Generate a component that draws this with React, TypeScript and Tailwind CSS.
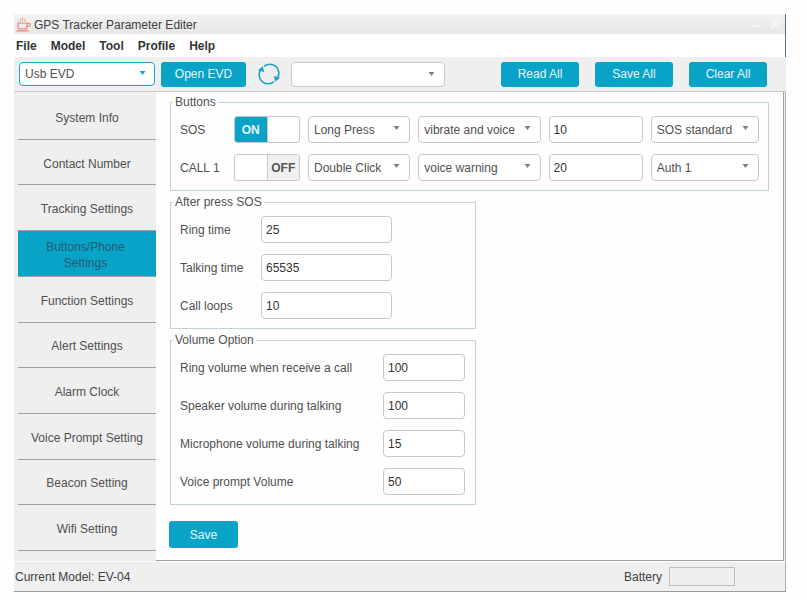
import React, { useState } from "react";
import clsx from "clsx";

const MENUS = ["File", "Model", "Tool", "Profile", "Help"];

const NAV_ITEMS = [
  "System Info",
  "Contact Number",
  "Tracking Settings",
  "Buttons/Phone Settings",
  "Function Settings",
  "Alert Settings",
  "Alarm Clock",
  "Voice Prompt Setting",
  "Beacon Setting",
  "Wifi Setting",
];

const BUTTON_ROWS = [
  { name: "SOS", enabled: true, press: "Long Press", feedback: "vibrate and voice", value: "10", target: "SOS standard" },
  { name: "CALL 1", enabled: false, press: "Double Click", feedback: "voice warning", value: "20", target: "Auth 1" },
];

const AFTER_SOS = [
  { id: "ring-time", label: "Ring time", value: "25" },
  { id: "talking-time", label: "Talking time", value: "65535" },
  { id: "call-loops", label: "Call loops", value: "10" },
];

const VOLUMES = [
  { id: "ring-volume", label: "Ring volume when receive a call", value: "100" },
  { id: "speaker-volume", label: "Speaker volume during talking", value: "100" },
  { id: "mic-volume", label: "Microphone volume during talking", value: "15" },
  { id: "prompt-volume", label: "Voice prompt Volume", value: "50" },
];

const JavaIcon = () => (
  <svg width="15" height="15" viewBox="0 0 15 15" fill="none" stroke="#e98478" strokeWidth="1.2" aria-hidden="true">
    <path d="M2 6h9v3.500c0 1.600-1 2.500-2.500 2.500h-4C3 12 2 11 2 9.500z" />
    <path d="M11 6.500h2.500c1 0 .8 3-1 3H11M0.500 13.800h12" />
    <path d="M4.500 4.500c-1-1 .6-1.500-.2-3M6.600 4.500c-1-1 .8-2-.1-4M8.800 4.500c-1-1 .6-1.500-.2-3" strokeWidth="0.8" />
  </svg>
);

const RefreshIcon = () => (
  <svg width="22" height="22" viewBox="0 0 22 22" fill="none" stroke="#1ba3c8" strokeWidth="1.600" aria-hidden="true">
    <path d="M6 3.300A9 9 0 0 1 19.700 14.500" />
    <path d="M16 18.700A9 9 0 0 1 2.300 7.500" />
    <path d="M15.800 13l6.200 1.700-4.800 4zM6.200 9L0 7.300l4.800-4z" fill="#1ba3c8" stroke="none" />
  </svg>
);

type SelectProps = {
  label: string;
  value: string;
  className?: string;
  focused?: boolean;
};

const Select = ({ label, value, className, focused }: SelectProps) => (
  <div className={clsx("relative", className)}>
    <select
      aria-label={label}
      defaultValue={value}
      className={clsx(
        "h-full w-full appearance-none rounded-[4px] border bg-white pr-[18px] pl-[5px] outline-none",
        focused ? "border-[#1ba3c8]" : "border-[#c8c8c8]",
      )}
    >
      <option value={value}>{value}</option>
    </select>
    <svg
      width="7"
      height="4"
      viewBox="0 0 7 4"
      className={clsx(
        "pointer-events-none absolute",
        focused ? "top-[9px] right-[9px] text-[#1ba3c8]" : "top-[10px] right-[10px] text-[#808080]",
      )}
      aria-hidden="true"
    >
      <path d="M0.500 0h6L3.500 4z" fill="currentColor" />
    </svg>
  </div>
);

const inputBase =
  "h-[27px] w-full min-w-0 rounded-[4px] border border-[#c8c8c8] bg-white px-[4px] text-[#333333] outline-none focus:border-[#1ba3c8]";

const PrimaryButton = ({ className, ...props }: React.ButtonHTMLAttributes<HTMLButtonElement>) => (
  <button
    type="button"
    className={clsx("rounded-[3px] bg-[#0aa3c8] text-center text-[#e6f7fb] hover:bg-[#0892b3]", className)}
    {...props}
  />
);

const Toggle = ({ label, initial }: { label: string; initial: boolean }) => {
  const [on, setOn] = useState(initial);
  return (
    <label className="relative flex h-[27px] cursor-pointer overflow-hidden rounded-[3px] border border-[#c8c8c8] bg-white font-bold">
      <input
        type="checkbox"
        aria-label={label}
        checked={on}
        onChange={(e) => setOn(e.target.checked)}
        className="sr-only"
      />
      <span className={clsx("flex flex-1 items-center justify-center", on && "bg-[#0aa3c8] text-[#e6f7fb]")}>
        {on ? "ON" : ""}
      </span>
      <span
        className={clsx(
          "flex flex-1 items-center justify-center border-l border-[#c8c8c8]",
          !on && "bg-[#f0f0f0] text-[#555555]",
        )}
      >
        {on ? "" : "OFF"}
      </span>
    </label>
  );
};

const Group = ({ title, className, children }: { title: string; className?: string; children: React.ReactNode }) => (
  <fieldset className={clsx("min-w-0 border border-[#c3d3dc]", className)}>
    <legend className="ml-[2px] px-[2px] leading-[15px]">{title}</legend>
    <div className="flex flex-col gap-[11px] px-[9px] pt-[6px] pb-[9px]">{children}</div>
  </fieldset>
);

const App: React.FC = () => {
  const [active, setActive] = useState("Buttons/Phone Settings");

  return (
    <div className="min-h-screen bg-[#fefefe] pt-[14px] pr-[21px] pl-[14px] font-['Liberation_Sans',Arial,sans-serif] text-[12px] leading-[16px] text-[#505050]">
      <div className="border-b border-[#9a9a9a] bg-[#efefef]">
        <div className="border-r border-[#56708c]">
          <header className="flex h-[20px] items-center bg-linear-to-b from-[#f3f3f3] to-[#e6e6e6] pr-[5px] pl-[2px]">
            <JavaIcon />
            <h1 className="ml-[3px] flex-1 pt-[2px] text-[#404040]">GPS Tracker Parameter Editer</h1>
            <button type="button" aria-label="Minimize" className="mr-[10px]">
              <svg width="10" height="10" viewBox="0 0 10 10" fill="none" stroke="#f7f7f7" strokeWidth="1.500">
                <path d="M1 7.500h8" />
              </svg>
            </button>
            <button type="button" aria-label="Close">
              <svg width="10" height="10" viewBox="0 0 10 10" fill="none" stroke="#f7f7f7" strokeWidth="1.500">
                <path d="M1 1l8 8M9 1l-8 8" />
              </svg>
            </button>
          </header>
          <nav aria-label="Menu" className="flex h-[23px] items-center gap-[14px] bg-white px-[2px] font-bold text-[#333333]">
            {MENUS.map((menu) => (
              <button key={menu} type="button">
                {menu}
              </button>
            ))}
          </nav>
        </div>

        <div className="flex h-[35px] items-center border-b border-[#cdcdcd] pr-[19px] pl-[5px]">
          <Select label="Connection" value="Usb EVD" focused className="h-[24px] w-[136px]" />
          <PrimaryButton className="ml-[6px] h-[25px] w-[85px]">Open EVD</PrimaryButton>
          <button type="button" aria-label="Refresh" className="ml-[12px]">
            <RefreshIcon />
          </button>
          <Select label="Device" value="" className="ml-[11px] h-[25px] w-[154px]" />
          <div className="ml-auto flex gap-[16px]">
            <PrimaryButton className="h-[25px] w-[78px]">Read All</PrimaryButton>
            <PrimaryButton className="h-[25px] w-[78px]">Save All</PrimaryButton>
            <PrimaryButton className="h-[25px] w-[78px]">Clear All</PrimaryButton>
          </div>
        </div>

        <div className="flex border-r border-[#b0b0b0]">
          <nav aria-label="Settings" className="flex w-[142px] shrink-0 flex-col pt-[2px] pb-[10px] pl-[4px]">
            {NAV_ITEMS.map((item) => (
              <button
                key={item}
                type="button"
                onClick={() => setActive(item)}
                className={clsx(
                  "flex-1 border-b border-[#a0a0a0] pt-[3px]",
                  item === active ? "bg-[#0aa3c8] pr-[31px] pl-[28px] text-[#245c70]" : "bg-[#efefef]",
                )}
              >
                {item}
              </button>
            ))}
          </nav>

          <main className="mr-px min-w-0 flex-1 border-r border-b border-[#a0a0a0] bg-[#fefefe] pt-[3px] pr-[14px] pb-[12px] pl-[14px]">
            <div className="flex flex-col gap-[4px]">
              <Group title="Buttons">
                {BUTTON_ROWS.map((row) => (
                  <div
                    key={row.name}
                    className="grid grid-cols-[46px_66px_minmax(0,102fr)_minmax(0,122fr)_minmax(0,94fr)_minmax(0,108fr)] items-center gap-[8px]"
                  >
                    <span>{row.name}</span>
                    <Toggle label={row.name + " enabled"} initial={row.enabled} />
                    <Select label={row.name + " press type"} value={row.press} className="h-[27px]" />
                    <Select label={row.name + " feedback"} value={row.feedback} className="h-[27px]" />
                    <input type="text" aria-label={row.name + " value"} defaultValue={row.value} className={inputBase} />
                    <Select label={row.name + " target"} value={row.target} className="h-[27px]" />
                  </div>
                ))}
              </Group>

              <Group title="After press SOS" className="w-[306px]">
                {AFTER_SOS.map((field) => (
                  <div key={field.id} className="grid grid-cols-[81px_131px] items-center">
                    <label htmlFor={field.id}>{field.label}</label>
                    <input id={field.id} type="text" defaultValue={field.value} className={inputBase} />
                  </div>
                ))}
              </Group>

              <Group title="Volume Option" className="w-[306px]">
                {VOLUMES.map((field) => (
                  <div key={field.id} className="grid grid-cols-[203px_82px] items-center">
                    <label htmlFor={field.id}>{field.label}</label>
                    <input id={field.id} type="text" defaultValue={field.value} className={inputBase} />
                  </div>
                ))}
              </Group>
            </div>
            <PrimaryButton className="mt-[16px] -ml-px block h-[27px] w-[69px]">Save</PrimaryButton>
          </main>
        </div>

        <footer className="flex h-[30px] items-center border-t border-r border-t-white border-r-[#b0b0b0] pr-[50px] pl-[1px] text-[#404040]">
          <span>Current Model: EV-04</span>
          <span id="battery-label" className="ml-auto">
            Battery
          </span>
          <div
            role="meter"
            aria-labelledby="battery-label"
            aria-valuenow={0}
            className="ml-[7px] h-[19px] w-[66px] border border-[#bdbdbd]"
          />
        </footer>
      </div>
    </div>
  );
};

export default App;
